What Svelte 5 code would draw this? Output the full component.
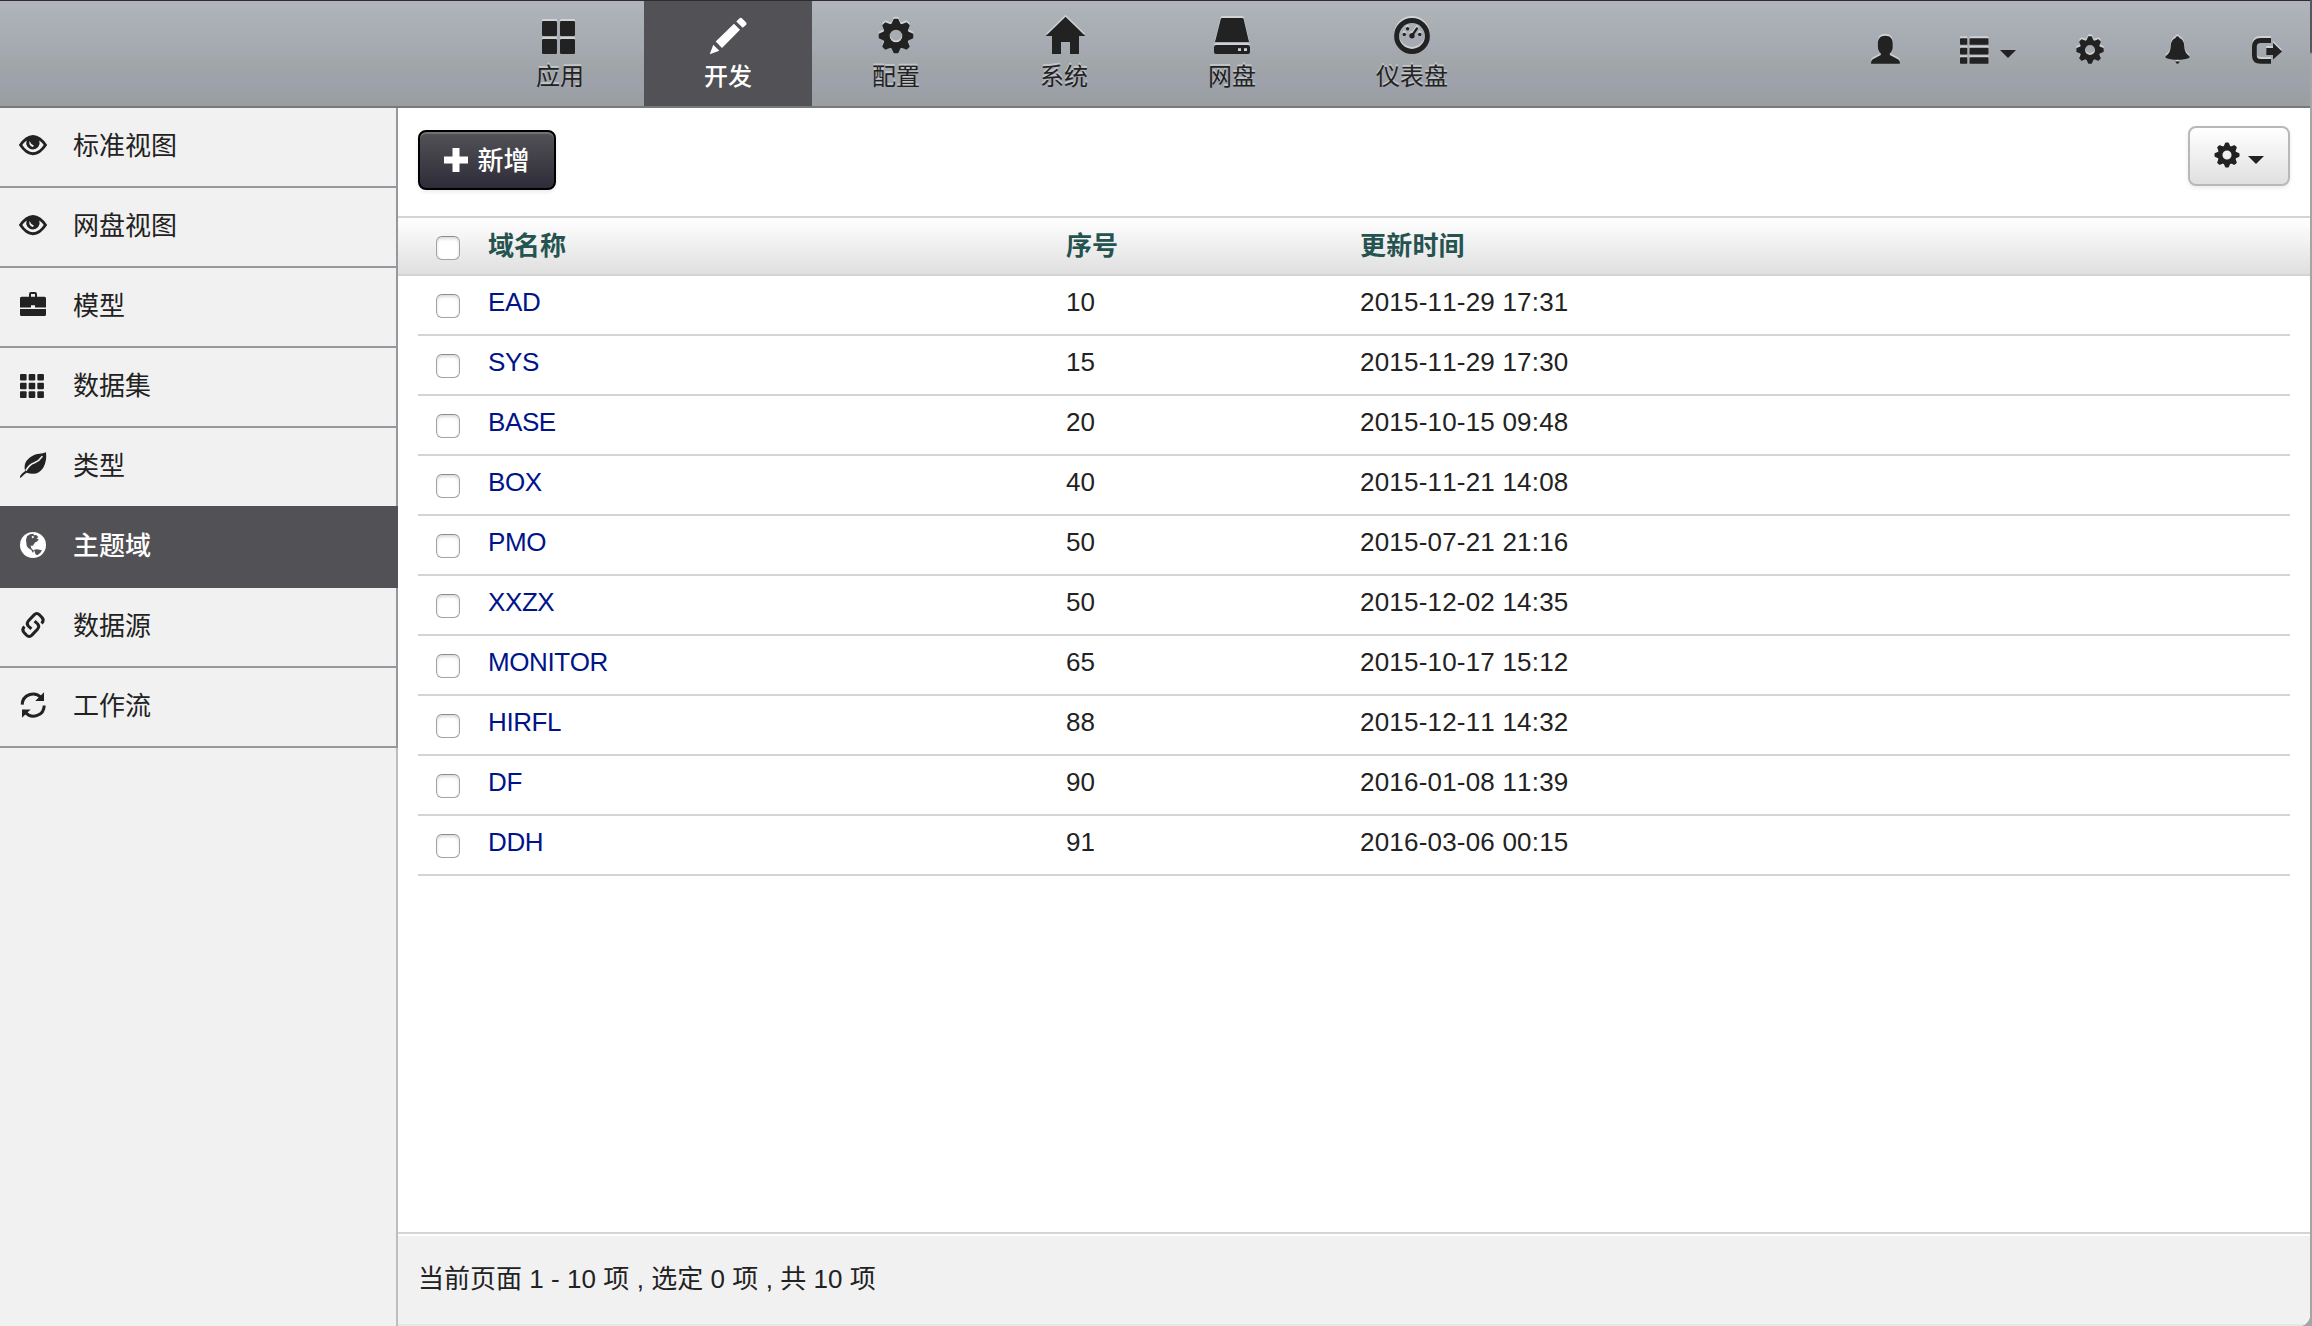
<script>
  const nav = [
    { icon: 'apps', label: '应用' },
    { icon: 'pencil', label: '开发', active: true },
    { icon: 'gear', label: '配置' },
    { icon: 'home', label: '系统' },
    { icon: 'drive', label: '网盘' },
    { icon: 'gauge', label: '仪表盘' }
  ];
  const side = [
    { icon: 'eye', label: '标准视图' },
    { icon: 'eye', label: '网盘视图' },
    { icon: 'briefcase', label: '模型' },
    { icon: 'grid', label: '数据集' },
    { icon: 'leaf', label: '类型' },
    { icon: 'globe', label: '主题域', active: true },
    { icon: 'link', label: '数据源' },
    { icon: 'refresh', label: '工作流' }
  ];
  const rows = [
    ['EAD', 10, '2015-11-29 17:31'],
    ['SYS', 15, '2015-11-29 17:30'],
    ['BASE', 20, '2015-10-15 09:48'],
    ['BOX', 40, '2015-11-21 14:08'],
    ['PMO', 50, '2015-07-21 21:16'],
    ['XXZX', 50, '2015-12-02 14:35'],
    ['MONITOR', 65, '2015-10-17 15:12'],
    ['HIRFL', 88, '2015-12-11 14:32'],
    ['DF', 90, '2016-01-08 11:39'],
    ['DDH', 91, '2016-03-06 00:15']
  ];
  const teeth = [0, 45, 90, 135, 180, 225, 270, 315];
  const cells = [0, 8.67, 17.33];
</script>

{#snippet gearShape()}
  <path fill-rule="evenodd" d="M0-13A13 13 0 1 1 0 13A13 13 0 1 1 0-13ZM0-6.3A6.3 6.3 0 1 0 0 6.3A6.3 6.3 0 1 0 0-6.3Z" />
  {#each teeth as a}
    <path transform="rotate({a})" d="M-4.8-11.5L-2.7-16.2Q-2.5-17.3-1.5-17.3H1.5Q2.5-17.3 2.7-16.2L4.8-11.5Z" />
  {/each}
{/snippet}

{#snippet navIcon(name)}
  <svg class="nav-icon" viewBox="0 0 40 40">
    {#if name === 'apps'}
      <rect x="2" y="5" width="15" height="15" rx="1.3" /><rect x="20" y="5" width="15" height="15" rx="1.3" />
      <rect x="2" y="23" width="15" height="15" rx="1.3" /><rect x="20" y="23" width="15" height="15" rx="1.3" />
    {:else if name === 'pencil'}
      <path d="M1.7 38.3L5.3 28.7L11.3 34.8ZM7.7 25.5L26 7.7L32 13.8L14 32ZM28.3 5.4L31.3 2.4Q32.7 1.2 34.1 2.4L38 6.3Q39.3 7.7 38 9.1L34.7 11.8Z" />
    {:else if name === 'gear'}
      <g transform="translate(20 20)">{@render gearShape()}</g>
    {:else if name === 'home'}
      <path d="M21.5.7L41.3 20H35V38H26V26H17V38H8V20H1.8Z" />
    {:else if name === 'drive'}
      <path d="M10.2 2H30.2Q31.4 2 31.7 3.2L37 26H3L8.7 3.2Q9 2 10.2 2Z" />
      <path fill-rule="evenodd" d="M4 29H36Q38 29 38 31V36Q38 38 36 38H4Q2 38 2 36V31Q2 29 4 29ZM26 32V35H29V32ZM32 32V35H35V32Z" />
    {:else if name === 'gauge'}
      <circle class="line" cx="20" cy="20" r="15.4" stroke-width="5" />
      <circle cx="12.3" cy="18.4" r="1.7" /><circle cx="15.6" cy="12.7" r="1.7" />
      <circle cx="27.7" cy="18.4" r="1.7" /><circle cx="20" cy="19.7" r="2.7" />
      <path class="line" d="M20 19.7L24.8 12.6" stroke-width="2.4" stroke-linecap="round" />
    {/if}
  </svg>
{/snippet}

{#snippet sideIcon(name)}
  <svg class="icon" viewBox="0 0 30 30">
    {#if name === 'eye'}
      <path fill-rule="evenodd" d="M.8 15Q7.5 5 15 5Q22.5 5 29.2 15Q22.5 25.2 15 25.2Q7.5 25.2 .8 15ZM4.3 15Q9 22.2 15 22.2Q21 22.2 25.7 15Q24 12.3 21.3 10.4Q22.4 14 20.2 17Q18.2 19.4 15 19.4Q11.5 19.4 9.4 16.7Q7.4 13.7 8.7 10.4Q6 12.3 4.3 15Z" />
      <path class="hole" d="M11.6 11Q10.3 15.6 14.6 17Q15.6 16.6 15.8 15.4Q12.7 14.4 11.6 11Z" />
    {:else if name === 'briefcase'}
      <path fill-rule="evenodd" d="M11 6.7V4.2Q11 2 13 2H17Q19 2 19 4.2V6.7H26.5Q28 6.7 28 8.2V17.5H17V15.2H13V17.5H2V8.2Q2 6.7 3.5 6.7ZM13 6.7H17V4H13Z" />
      <path d="M2 19H28V24.5Q28 26 26.5 26H3.5Q2 26 2 24.5Z" />
    {:else if name === 'grid'}
      {#each cells as y}
        {#each cells as x}
          <rect x={2 + x} y={4 + y} width="6.6" height="6.6" rx="1" />
        {/each}
      {/each}
    {:else if name === 'leaf'}
      <path d="M28 2.2Q29 11 25.4 17.5Q21.5 23.8 15 23.8Q11.5 23.8 8.5 22.8Q6.5 24 3.3 27.2Q2.4 28.2 2 27.6Q1.7 26.4 3 24.8Q5 22.5 7 21.2Q5 13 11.5 7.8Q17 4 21.5 3.8Q25 3.6 28 2.2Z" />
      <path class="cut" d="M8.2 20.2Q11 14.6 16.5 12.7Q21.5 10.6 24 6.6" />
    {:else if name === 'globe'}
      <circle cx="15" cy="15" r="13" />
      <path class="land" d="M9 6.2Q12 3.6 16 3.8L15.3 5.2L18.2 5L20.5 7.2L18.4 8.2L20.8 9.4Q19.2 11.6 17 12.5L14.8 15.7L12.5 15.8L13.7 19L16 20.5L15 23Q13.5 19.5 11 18.6Q8.2 16.8 8.4 13Q7.4 9.8 9 6.2ZM16 19.8L19 19.2L24 20.3Q22.5 23.8 19.3 25.3L17.5 24.3Z" />
      <circle cx="14.8" cy="7.1" r="1.1" />
    {:else if name === 'link'}
      {#each [0, 180] as turn}
        <path
          class="line"
          stroke-width="3"
          transform="translate(15 15) rotate({turn})"
          d="M8.6-1.6Q11.4-4.6 9.2-7.2L6.4-10.2Q3.8-12.8 1.1-10.1L-4.7-3.9Q-6.8-1.4-4.7 1L-1.6 3.9"
        />
      {/each}
    {:else if name === 'refresh'}
      <path class="line" stroke-width="3" d="M4.2 14.6A10.8 10.8 0 0 1 23 7.6M26.2 15.4A10.8 10.8 0 0 1 7.4 22.6" />
      <path d="M26 2.2V11H17.2ZM4 27.8V19.4H12.6Z" />
    {/if}
  </svg>
{/snippet}

<div class="window">
  <header>
    <nav>
      {#each nav as item}
        <a class="nav-item" class:active={item.active}>
          {@render navIcon(item.icon)}
          <span>{item.label}</span>
        </a>
      {/each}
    </nav>
    <div class="tools">
      <svg class="icon" viewBox="0 0 30 30">
        <path d="M14.3.7C19 .7 21.7 3.5 21.7 8V12C21.7 15 20.3 17 18.8 18.6V20L27.3 24.6Q29 25.5 29 28.8H0Q0 25.5 1.4 24.6L9.8 20V18.6C8.3 17 6.9 15 6.9 12V8C6.9 3.5 9.6.7 14.3.7Z" />
      </svg>
      <div class="menu">
        <svg class="icon" viewBox="0 0 30 30">
          {#each [3.2, 12.8, 22.2] as y}
            <rect x="0" {y} width="7.3" height="6.6" rx=".8" /><rect x="9.5" {y} width="19" height="6.6" rx=".8" />
          {/each}
        </svg>
        <i class="caret"></i>
      </div>
      <svg class="icon" viewBox="0 0 30 30"><g transform="translate(15 15) scale(.79)">{@render gearShape()}</g></svg>
      <svg class="icon" viewBox="0 0 30 30">
        <path d="M14.5 1.2Q16.3 1.2 16.5 3Q20.6 4.5 21.1 10Q21.5 18 25.6 20.4Q27.3 22 26 23Q22 24.8 14.5 24.8Q7 24.8 3 23Q1.7 22 3.4 20.4Q7.5 18 7.9 10Q8.4 4.5 12.5 3Q12.7 1.2 14.5 1.2ZM12.4 26.6H16.6Q16 28.8 14.5 28.8Q13 28.8 12.4 26.6Z" />
      </svg>
      <svg class="icon" viewBox="0 0 30 30">
        <path class="line" stroke-width="4.8" d="M19 5.5H8.5Q2.4 5.5 2.4 11.5V20.5Q2.4 26.4 8.5 26.4H19" />
        <path d="M14.3 12.9H21V7.8L30 16.4L21 24.5V19.9H14.3Z" />
      </svg>
    </div>
  </header>

  <div class="body">
    <aside>
      <ul>
        {#each side as item}
          <li class:active={item.active}>
            {@render sideIcon(item.icon)}
            <span>{item.label}</span>
          </li>
        {/each}
      </ul>
    </aside>

    <main>
      <div class="toolbar">
        <button class="add">
          <svg class="plus" viewBox="0 0 24 24"><path d="M8.5 0H15.5V8.5H24V15.5H15.5V24H8.5V15.5H0V8.5H8.5Z" /></svg>
          <span>新增</span>
        </button>
        <button class="options">
          <svg class="small-gear" viewBox="-18 -18 36 36">{@render gearShape()}</svg>
          <i class="caret"></i>
        </button>
      </div>

      <div class="row head">
        <input type="checkbox" />
        <span>域名称</span><span>序号</span><span>更新时间</span>
      </div>
      <div class="rows">
        {#each rows as [name, order, time]}
          <div class="row">
            <input type="checkbox" />
            <a class="name">{name}</a><span>{order}</span><span>{time}</span>
          </div>
        {/each}
      </div>

      <footer>当前页面 1 - 10 项 , 选定 0 项 , 共 10 项</footer>
    </main>
  </div>
</div>

<style>
  :global(body) {
    background: linear-gradient(#55585c 0 52px, #a5a5a8 54px 100%);
  }
  .window {
    box-sizing: border-box;
    display: flex;
    flex-direction: column;
    width: 2310px;
    height: 1326px;
    border-top: 1px solid #302b2e;
    border-bottom-right-radius: 11px;
    overflow: hidden;
    background: #fff;
    color: #222;
    font: 26px 'Liberation Sans', 'Noto Sans CJK SC', sans-serif;
  }
  svg {
    display: block;
    flex: none;
    overflow: visible;
    fill: currentColor;
  }
  .line {
    fill: none;
    stroke: currentColor;
  }
  .hole {
    fill: #f1f1f1;
  }
  .cut {
    fill: none;
    stroke: #f1f1f1;
    stroke-width: 1.7;
    stroke-linecap: round;
  }
  .land {
    fill: #525156;
  }
  .icon {
    width: 30px;
    height: 30px;
  }
  .caret {
    width: 0;
    height: 0;
    border: 8px solid transparent;
    border-top-color: #222;
    border-bottom: 0;
  }

  header {
    box-sizing: border-box;
    flex: none;
    display: flex;
    justify-content: space-between;
    height: 107px;
    padding: 0 28px 0 476px;
    border-bottom: 2px solid #77777c;
    background: linear-gradient(#b1b4be, #aab0b4 20%, #a6aab2 42%, #a1a6a9 60%, #9da1aa 80%, #999e9f);
  }
  nav {
    display: flex;
  }
  .nav-item {
    display: flex;
    flex-direction: column;
    align-items: center;
    padding: 15px 60px 0;
    font-size: 24px;
    line-height: 42px;
    text-shadow: 0 -2px 0 rgba(255, 255, 255, 0.4);
  }
  .nav-item.active {
    background: #525156;
    color: #fff;
    font-weight: 500;
    text-shadow: none;
  }
  .nav-icon {
    width: 40px;
    height: 40px;
  }
  .nav-item:not(.active) .nav-icon,
  .tools .icon {
    filter: drop-shadow(0 -2px 0 rgba(255, 255, 255, 0.45));
  }
  .tools {
    display: flex;
    align-items: flex-start;
    gap: 58.75px;
    padding-top: 34px;
  }
  .menu {
    display: flex;
    align-items: center;
    gap: 10px;
  }
  .menu .caret {
    margin-top: 8px;
  }

  .body {
    flex: 1;
    display: flex;
    min-height: 0;
  }
  aside {
    box-sizing: border-box;
    flex: none;
    width: 398px;
    background: linear-gradient(#bebebf, #bebebf) right / 2px 100% no-repeat #f1f1f1;
  }
  ul {
    margin: 0;
    padding: 0;
    list-style: none;
  }
  li {
    box-sizing: border-box;
    display: flex;
    align-items: flex-start;
    gap: 25px;
    height: 80px;
    padding: 22px 18px 0;
    border-right: 2px solid #97979c;
    border-bottom: 2px solid #97979c;
    line-height: 32px;
  }
  li.active {
    height: 82px;
    margin-top: -2px;
    padding-top: 24px;
    border-color: #525156;
    background: #525156;
    color: #fff;
    font-weight: 500;
  }

  main {
    flex: 1;
    display: flex;
    flex-direction: column;
    min-width: 0;
  }
  .toolbar {
    box-sizing: border-box;
    flex: none;
    display: flex;
    align-items: flex-start;
    justify-content: space-between;
    height: 108px;
    padding: 18px 20px 0;
  }
  button {
    box-sizing: border-box;
    display: flex;
    align-items: center;
    justify-content: center;
    height: 60px;
    padding: 0;
    border-radius: 8px;
    font: inherit;
  }
  .add {
    width: 138px;
    margin-top: 4px;
    gap: 9px;
    border: 2px solid #000;
    background: linear-gradient(#535256, #2e2c38);
    box-shadow: inset 0 2px 0 rgba(255, 255, 255, 0.18), 0 2px 4px rgba(0, 0, 0, 0.08);
    color: #fff;
    font-weight: 500;
  }
  .add span {
    margin-bottom: 3px;
  }
  .plus {
    width: 24px;
    height: 24px;
  }
  .options {
    width: 102px;
    gap: 8px;
    border: 2px solid #b8b8b8;
    background: linear-gradient(#fff, #e0e0e0);
    box-shadow: 0 2px 4px rgba(0, 0, 0, 0.08);
    color: #222;
  }
  .small-gear {
    width: 26px;
    height: 26px;
    margin-top: -2px;
  }
  .options .caret {
    margin-top: 8px;
  }

  .row {
    box-sizing: border-box;
    flex: none;
    display: grid;
    grid-template-columns: 52px 578px 294px 1fr;
    align-items: start;
    height: 60px;
    padding: 10px 0 0 18px;
    border-bottom: 2px solid #d4d4d4;
    line-height: 32px;
    font-kerning: none;
  }
  .rows {
    flex: 1;
    padding: 0 20px;
  }
  .head {
    padding: 12px 0 0 38px;
    border-top: 2px solid #d4d4d4;
    background: linear-gradient(#fff, #dfdfdf);
    color: #255350;
    font-weight: 700;
  }
  .row span:last-child {
    letter-spacing: 0.2px;
  }
  .name {
    color: #001489;
    letter-spacing: -0.4px;
  }
  input {
    appearance: none;
    box-sizing: border-box;
    width: 24px;
    height: 24px;
    margin: 8px 0 0;
    border: 1.5px solid #a2a2a2;
    border-top-color: #8c8c8c;
    border-radius: 6px;
    background: #fff;
    box-shadow: inset 0 2px 3px rgba(0, 0, 0, 0.14);
  }
  .head input {
    margin-top: 6px;
  }

  footer {
    box-sizing: border-box;
    flex: none;
    height: 94px;
    padding-left: 20px;
    border-top: 2px solid #d4d4d4;
    border-bottom: 2px solid #e6e6e6;
    background: #f1f1f1;
    box-shadow: inset 0 2px 0 #fff;
    line-height: 90px;
    word-spacing: 0.1px;
  }
</style>
